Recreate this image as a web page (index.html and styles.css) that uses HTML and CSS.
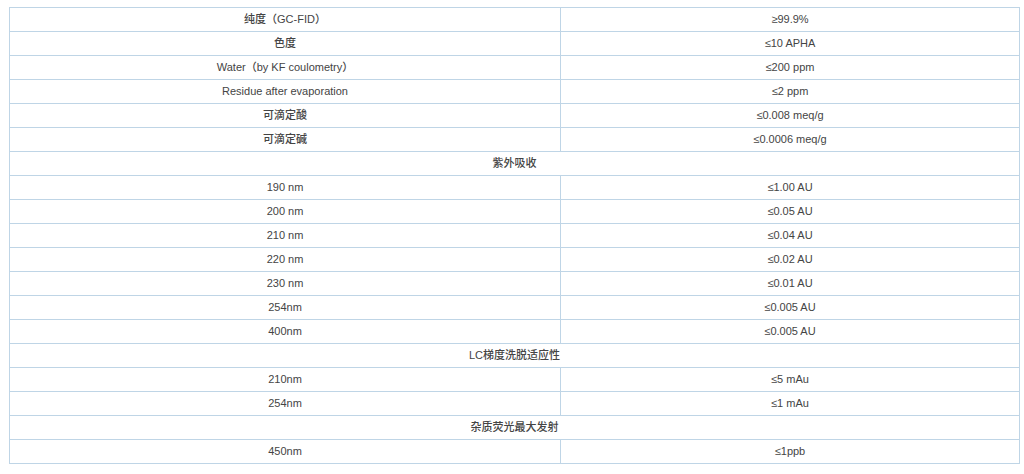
FILE: index.html
```html
<!DOCTYPE html>
<html lang="zh">
<head>
<meta charset="utf-8">
<title>Specs</title>
<link rel="stylesheet" href="styles.css">
</head>
<body>
<div class="wrap">
<table class="spec">
<colgroup><col class="c1"><col class="c2"></colgroup>
<tbody>
<tr><td>纯度（GC-FID）</td><td>≥99.9%</td></tr>
<tr><td>色度</td><td>≤10 APHA</td></tr>
<tr><td>Water（by KF coulometry）</td><td>≤200 ppm</td></tr>
<tr><td>Residue after evaporation</td><td>≤2 ppm</td></tr>
<tr><td>可滴定酸</td><td>≤0.008 meq/g</td></tr>
<tr><td>可滴定碱</td><td>≤0.0006 meq/g</td></tr>
<tr><td colspan="2">紫外吸收</td></tr>
<tr><td>190 nm</td><td>≤1.00 AU</td></tr>
<tr><td>200 nm</td><td>≤0.05 AU</td></tr>
<tr><td>210 nm</td><td>≤0.04 AU</td></tr>
<tr><td>220 nm</td><td>≤0.02 AU</td></tr>
<tr><td>230 nm</td><td>≤0.01 AU</td></tr>
<tr><td>254nm</td><td>≤0.005 AU</td></tr>
<tr><td>400nm</td><td>≤0.005 AU</td></tr>
<tr><td colspan="2">LC梯度洗脱适应性</td></tr>
<tr><td>210nm</td><td>≤5 mAu</td></tr>
<tr><td>254nm</td><td>≤1 mAu</td></tr>
<tr><td colspan="2">杂质荧光最大发射</td></tr>
<tr><td>450nm</td><td>≤1ppb</td></tr>
</tbody>
</table>
</div>
</body>
</html>
```
FILE: styles.css
```css
html, body {
  margin: 0;
  padding: 0;
  background: #ffffff;
}
.wrap {
  padding: 7px 0 0 9px;
}
.spec {
  border-collapse: collapse;
  width: 1010px;
  table-layout: fixed;
  font-family: "Liberation Sans", Arial, "Noto Sans CJK SC", sans-serif;
  font-size: 11px;
  font-weight: 500;
  color: #444;
}
.c1 { width: 551px; }
.c2 { width: 459px; }
.spec td {
  border: 1px solid #bfd5e6;
  height: 23px;
  padding: 0;
  text-align: center;
  vertical-align: middle;
  line-height: 23px;
}
```
